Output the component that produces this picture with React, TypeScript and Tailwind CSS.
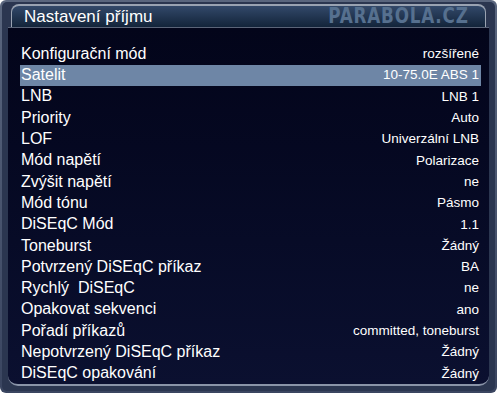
import React from 'react'

const rows: [string, string][] = [
  ['Konfigurační mód', 'rozšířené'],
  ['Satelit', '10-75.0E ABS 1'],
  ['LNB', 'LNB 1'],
  ['Priority', 'Auto'],
  ['LOF', 'Univerzální LNB'],
  ['Mód napětí', 'Polarizace'],
  ['Zvýšit napětí', 'ne'],
  ['Mód tónu', 'Pásmo'],
  ['DiSEqC Mód', '1.1'],
  ['Toneburst', 'Žádný'],
  ['Potvrzený DiSEqC příkaz', 'BA'],
  ['Rychlý  DiSEqC', 'ne'],
  ['Opakovat sekvenci', 'ano'],
  ['Pořadí příkazů', 'committed, toneburst'],
  ['Nepotvrzený DiSEqC příkaz', 'Žádný'],
  ['DiSEqC opakování', 'Žádný'],
]

export default function App() {
  return (
    <div className="w-[500px] h-[399px] bg-white" style={{ fontFamily: '"Liberation Sans", Arial, sans-serif' }}>
      <div className="w-[497px] h-[393px] rounded-[6px] bg-gradient-to-b from-[#5a667e] to-[#3a4560] p-[2px]">
        <div className="flex flex-col h-full rounded-[5px] bg-[#2b3650] px-[6px] pt-[2px] pb-[5px]">
          {/* title bar */}
          <div className="flex items-center justify-between h-[27px] mx-[3px] rounded-t-[8px] border-t-2 border-l border-r border-[#9aa3b2] bg-gradient-to-b from-[#33496a] to-[#13243a] pl-[12px] pr-[16px]">
            <span className="text-white text-[17px] leading-none">Nastavení příjmu</span>
            <span
              className="text-[#56708f] text-[21px] font-bold leading-none tracking-[1px] scale-x-[0.8] origin-right"
              style={{ fontFamily: '"DejaVu Sans", sans-serif' }}
            >
              PARABOLA.CZ
            </span>
          </div>
          <div className="h-[3px] bg-[#5b6478]" />
          {/* content */}
          <div className="flex-1 rounded-b-[10px] border-b-2 border-[#8a94a8] bg-gradient-to-b from-[#03051a] to-[#0b1030] pt-[15px] pl-[12px] pr-[8px]">
            {rows.map(([label, value], i) => (
              <div
                key={label}
                className={`flex items-center justify-between h-[21.3px] pl-[1px] pr-[2px] ${i === 1 ? 'bg-[#6e86a6]' : ''}`}
              >
                <span className="text-white text-[16px] leading-none whitespace-pre">{label}</span>
                <span className="text-white text-[13.5px] leading-none">{value}</span>
              </div>
            ))}
          </div>
        </div>
      </div>
    </div>
  )
}
